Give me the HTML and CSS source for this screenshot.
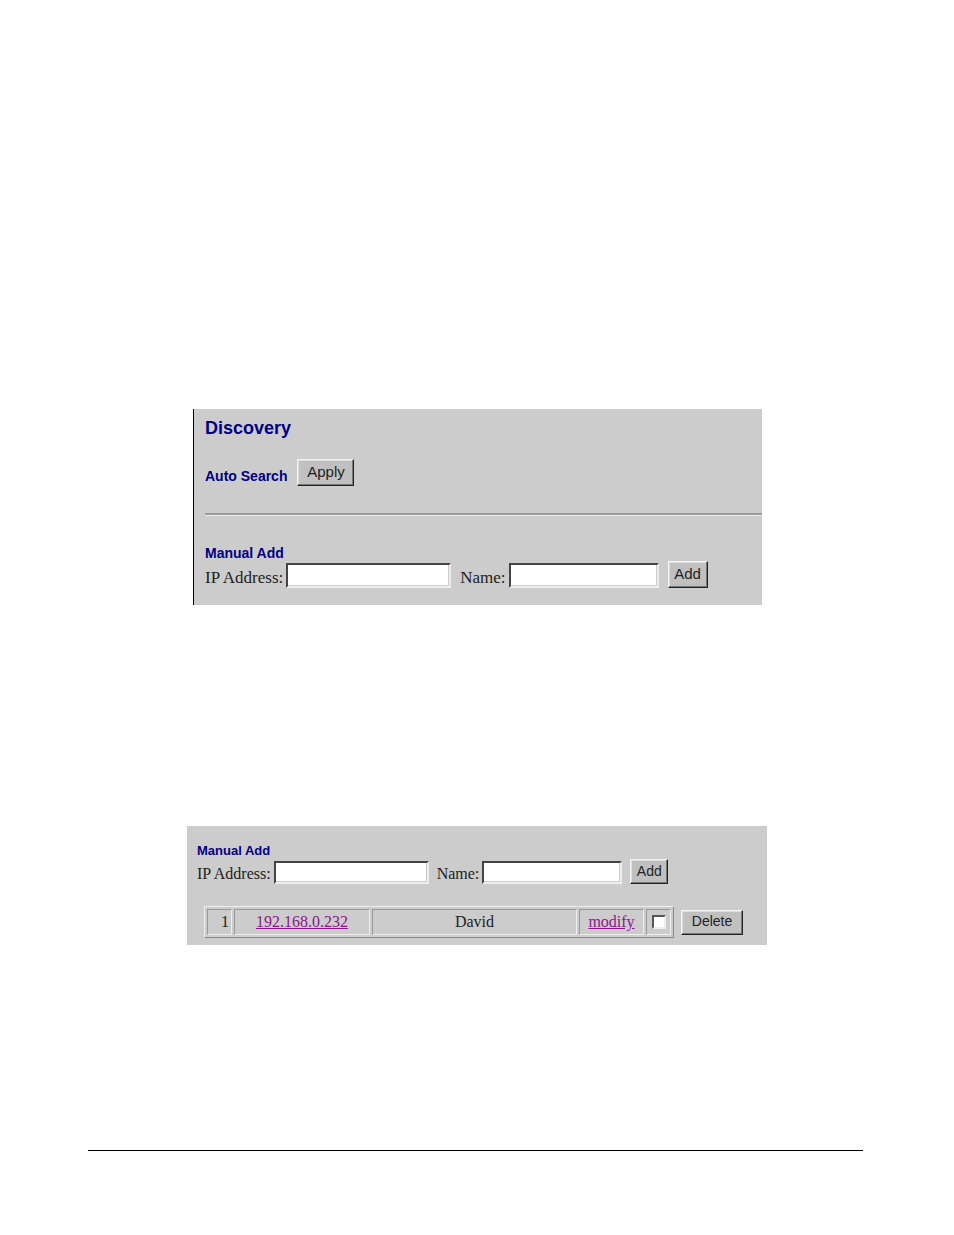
FILE: index.html
```html
<!DOCTYPE html>
<html lang="en">

<head>
    <meta charset="utf-8">
    <meta name="viewport" content="width=device-width, initial-scale=1.0">
    <title>Discovery</title>
    <link rel="stylesheet" href="styles.css">
</head>

<body>
    <main class="page">
        <section class="panel discovery">
            <h1>Discovery</h1>
            <form class="search">
                <h2>Auto Search</h2>
                <button type="button">Apply</button>
            </form>
            <hr class="divider">
            <h2>Manual Add</h2>
            <form class="add-form">
                <label for="ip">IP Address:</label>
                <input class="field field-ip" type="text" id="ip">
                <label for="name">Name:</label>
                <input class="field field-name" type="text" id="name">
                <button type="button">Add</button>
            </form>
        </section>

        <section class="panel manual">
            <h2>Manual Add</h2>
            <form class="add-form">
                <label for="ip2">IP Address:</label>
                <input class="field field-ip" type="text" id="ip2">
                <label for="name2">Name:</label>
                <input class="field field-name" type="text" id="name2">
                <button type="button">Add</button>
            </form>
            <form class="devices">
                <table>
                    <tr>
                        <td class="col-num">1</td>
                        <td class="col-ip"><a href="#">192.168.0.232</a></td>
                        <td class="col-name">David</td>
                        <td class="col-edit"><a href="#">modify</a></td>
                        <td class="col-check"><input class="check" type="checkbox" aria-label="Select David"></td>
                    </tr>
                </table>
                <button type="button">Delete</button>
            </form>
        </section>
    </main>

    <footer class="page-footer"></footer>
</body>

</html>
```

FILE: styles.css
```css
* {
    box-sizing: border-box;
}

body {
    margin: 0;
    padding: 0 91px 0 88px;
    min-height: 100vh;
    display: flex;
    flex-direction: column;
    background-color: #fff;
    color: #222;
    font-family: "Liberation Serif", "Times New Roman", serif;
}

.page {
    flex: 1;
    padding-top: 409px;
}

.panel {
    background-color: #ccc;
}

h1,
h2 {
    margin: 0;
    color: #000084;
    font-family: "Liberation Sans", Arial, sans-serif;
}

h1 {
    font-size: 18px;
    line-height: 20px;
}

h2 {
    font-size: 14px;
    line-height: 16px;
}

/* Grey raised buttons */
button {
    padding: 0 0 2px;
    height: 27px;
    background-color: #c0c0c0;
    border: 1px solid;
    border-color: #f4f4f4 #222 #222 #f4f4f4;
    box-shadow: inset -1px -1px #777, inset 1px 1px #ddd;
    color: #222;
    font-family: "Liberation Sans", Arial, sans-serif;
    font-size: 15px;
}

/* Sunken text boxes */
.field {
    min-width: 0;
    height: 25px;
    padding: 0 4px;
    background-color: #fff;
    border: 2px solid;
    border-color: #444 #eee #eee #444;
    box-shadow: inset -1px -1px #ccc;
}

.discovery {
    margin: 0 101px 0 105px;
    padding: 9px 0 17px 11px;
    border-left: 1px solid #000;
    font-size: 17px;
}

.search {
    display: flex;
    align-items: center;
    gap: 10px;
    margin-top: 21px;
}

.search h2 {
    padding-top: 6px;
}

.search button {
    width: 57px;
}

.divider {
    height: 3px;
    margin: 27px 0 29px;
    border: 0;
    border-top: 2px solid #999;
    border-bottom: 1px solid #eee;
}

.add-form {
    display: flex;
    align-items: flex-end;
}

.add-form label {
    line-height: 20px;
    margin-right: 3px;
    white-space: nowrap;
}

.add-form .field {
    margin-right: 9px;
}

.discovery .field-ip {
    width: 165px;
}

.discovery .field-name {
    width: 150px;
}

.discovery .add-form button {
    width: 40px;
}

.manual {
    margin: 221px 96px 0 99px;
    padding: 17px 24px 7px 10px;
    font-size: 16px;
}

.manual h2 {
    font-size: 13px;
    line-height: 16px;
}

.manual button {
    height: 25px;
    font-size: 14px;
}

.manual .field {
    height: 23px;
    margin-right: 8px;
}

.manual .field-ip {
    width: 155px;
}

.manual .field-name {
    width: 140px;
}

.manual .add-form button {
    width: 38px;
}

.devices {
    display: flex;
    align-items: center;
    gap: 7px;
    margin: 22px 0 0 7px;
}

.devices table {
    flex: 1;
    border: 1px solid;
    border-color: #eee #888 #888 #eee;
    border-spacing: 2px;
    table-layout: fixed;
    width: 100%;
}

.devices td {
    height: 26px;
    padding: 0;
    border: 1px solid;
    border-color: #999 #eee #eee #999;
    text-align: center;
    line-height: 20px;
}

.devices .col-num {
    width: 25px;
    padding-right: 2px;
    text-align: right;
}

.col-ip {
    width: 136px;
}

.col-edit {
    width: 65px;
}

.col-check {
    width: 25px;
}

.devices a {
    color: #8b168b;
}

.devices button {
    width: 62px;
}

.check {
    appearance: none;
    display: block;
    width: 14px;
    height: 14px;
    margin: 0 auto;
    background-color: #fff;
    border: 2px solid;
    border-color: #555 #eee #eee #555;
}

.check:checked {
    background-color: #000084;
}

.page-footer {
    height: 85px;
    border-top: 1px solid #000;
}
```
